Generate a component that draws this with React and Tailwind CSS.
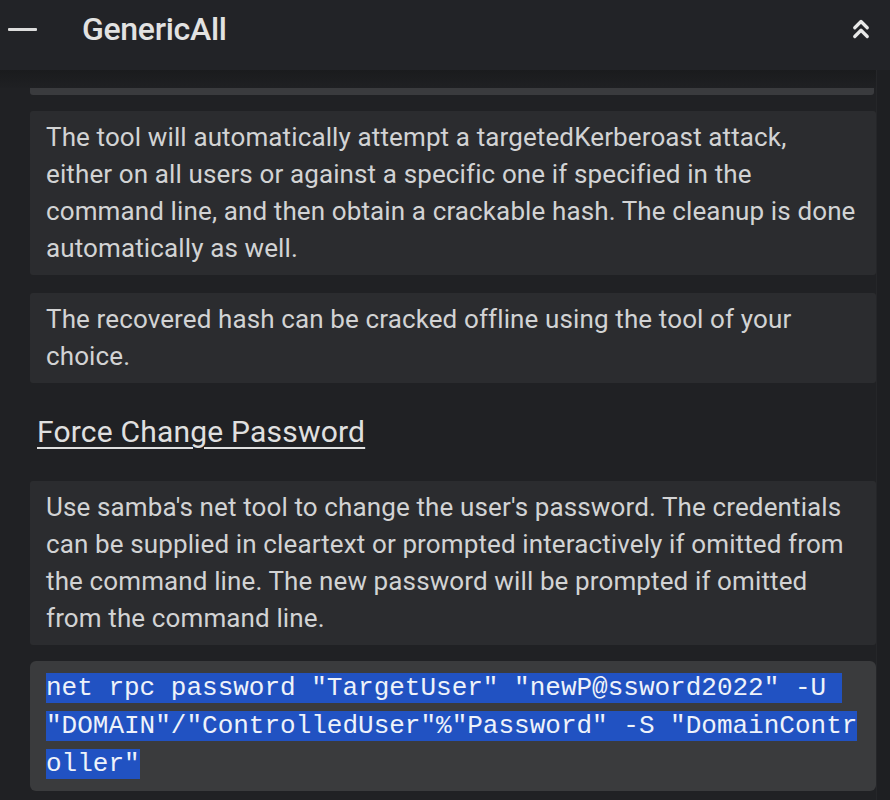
import React from "react";

const roboto = { fontFamily: "Roboto, 'Noto Sans', Arial, sans-serif" };

function Card({ lines }) {
  return (
    <div className="rounded-[3px] bg-[#2b2c2f] px-4 py-2 text-[26px] leading-[37px] tracking-[0.12px] text-[#d2d3d4]">
      {lines.map((l, i) => (
        <div key={i} className="whitespace-nowrap">{l}</div>
      ))}
    </div>
  );
}

export default function App() {
  const code = [
    'net rpc password "TargetUser" "newP@ssword2022" -U ',
    '"DOMAIN"/"ControlledUser"%"Password" -S "DomainContr',
    'oller"',
  ];
  return (
    <div className="w-[890px] h-[800px] overflow-hidden bg-[#202124] flex flex-col" style={roboto}>
      <header className="h-[70px] shrink-0 bg-[#222327] flex items-center pl-[8px] pr-[14px] pb-[12px]">
        <div className="w-[29px] h-[3px] bg-[#dcdcdc] rounded-[1px]" />
        <div className="ml-[45px] text-[32px] font-medium text-[#e2e2e2] tracking-[-0.3px]">GenericAll</div>
        <div className="ml-auto">
          <svg width="30" height="30" viewBox="0 0 24 24" fill="none" stroke="#e8e8e8" strokeWidth="2.6" strokeLinecap="round" strokeLinejoin="round">
            <path d="m17 11-5-5-5 5" />
            <path d="m17 18-5-5-5 5" />
          </svg>
        </div>
      </header>
      <div className="flex flex-1 min-h-0">
        <main className="flex-1 flex flex-col">
          <div className="h-[18px] bg-gradient-to-b from-[#1a1b1d] to-[#1f2023]" />
          <div className="ml-[30px] mr-[2px] h-[7px] bg-[#3a3b3e] rounded-b-[3px]" />
          <div className="pl-[30px] pt-[16px] flex flex-col">
            <Card
              lines={[
                "The tool will automatically attempt a targetedKerberoast attack,",
                "either on all users or against a specific one if specified in the",
                "command line, and then obtain a crackable hash. The cleanup is done",
                "automatically as well.",
              ]}
            />
            <div className="h-[18px]" />
            <Card
              lines={[
                "The recovered hash can be cracked offline using the tool of your",
                "choice.",
              ]}
            />
            <div className="pt-[28px] pb-[28px] pl-[7px]">
              <span className="text-[30px] leading-[42px] tracking-[0.2px] text-[#e0e0e0] underline decoration-[2px] underline-offset-[5px]">
                Force Change Password
              </span>
            </div>
            <Card
              lines={[
                "Use samba's net tool to change the user's password. The credentials",
                "can be supplied in cleartext or prompted interactively if omitted from",
                "the command line. The new password will be prompted if omitted",
                "from the command line.",
              ]}
            />
            <div className="h-[16px]" />
            <div
              className="rounded-[6px] bg-[#3a3b3d] px-4 py-[8px] text-[26px] leading-[38px] text-[#eef2fa]"
              style={{ fontFamily: "'Liberation Mono', 'DejaVu Sans Mono', monospace" }}
            >
              {code.map((l, i) => (
                <div key={i} className="whitespace-pre">
                  <span className="bg-[#2152c2]">{l}</span>
                </div>
              ))}
            </div>
          </div>
        </main>
        <div className="w-[14px] shrink-0 bg-[#1e1f22] border-l border-[#252629]" />
      </div>
    </div>
  );
}
